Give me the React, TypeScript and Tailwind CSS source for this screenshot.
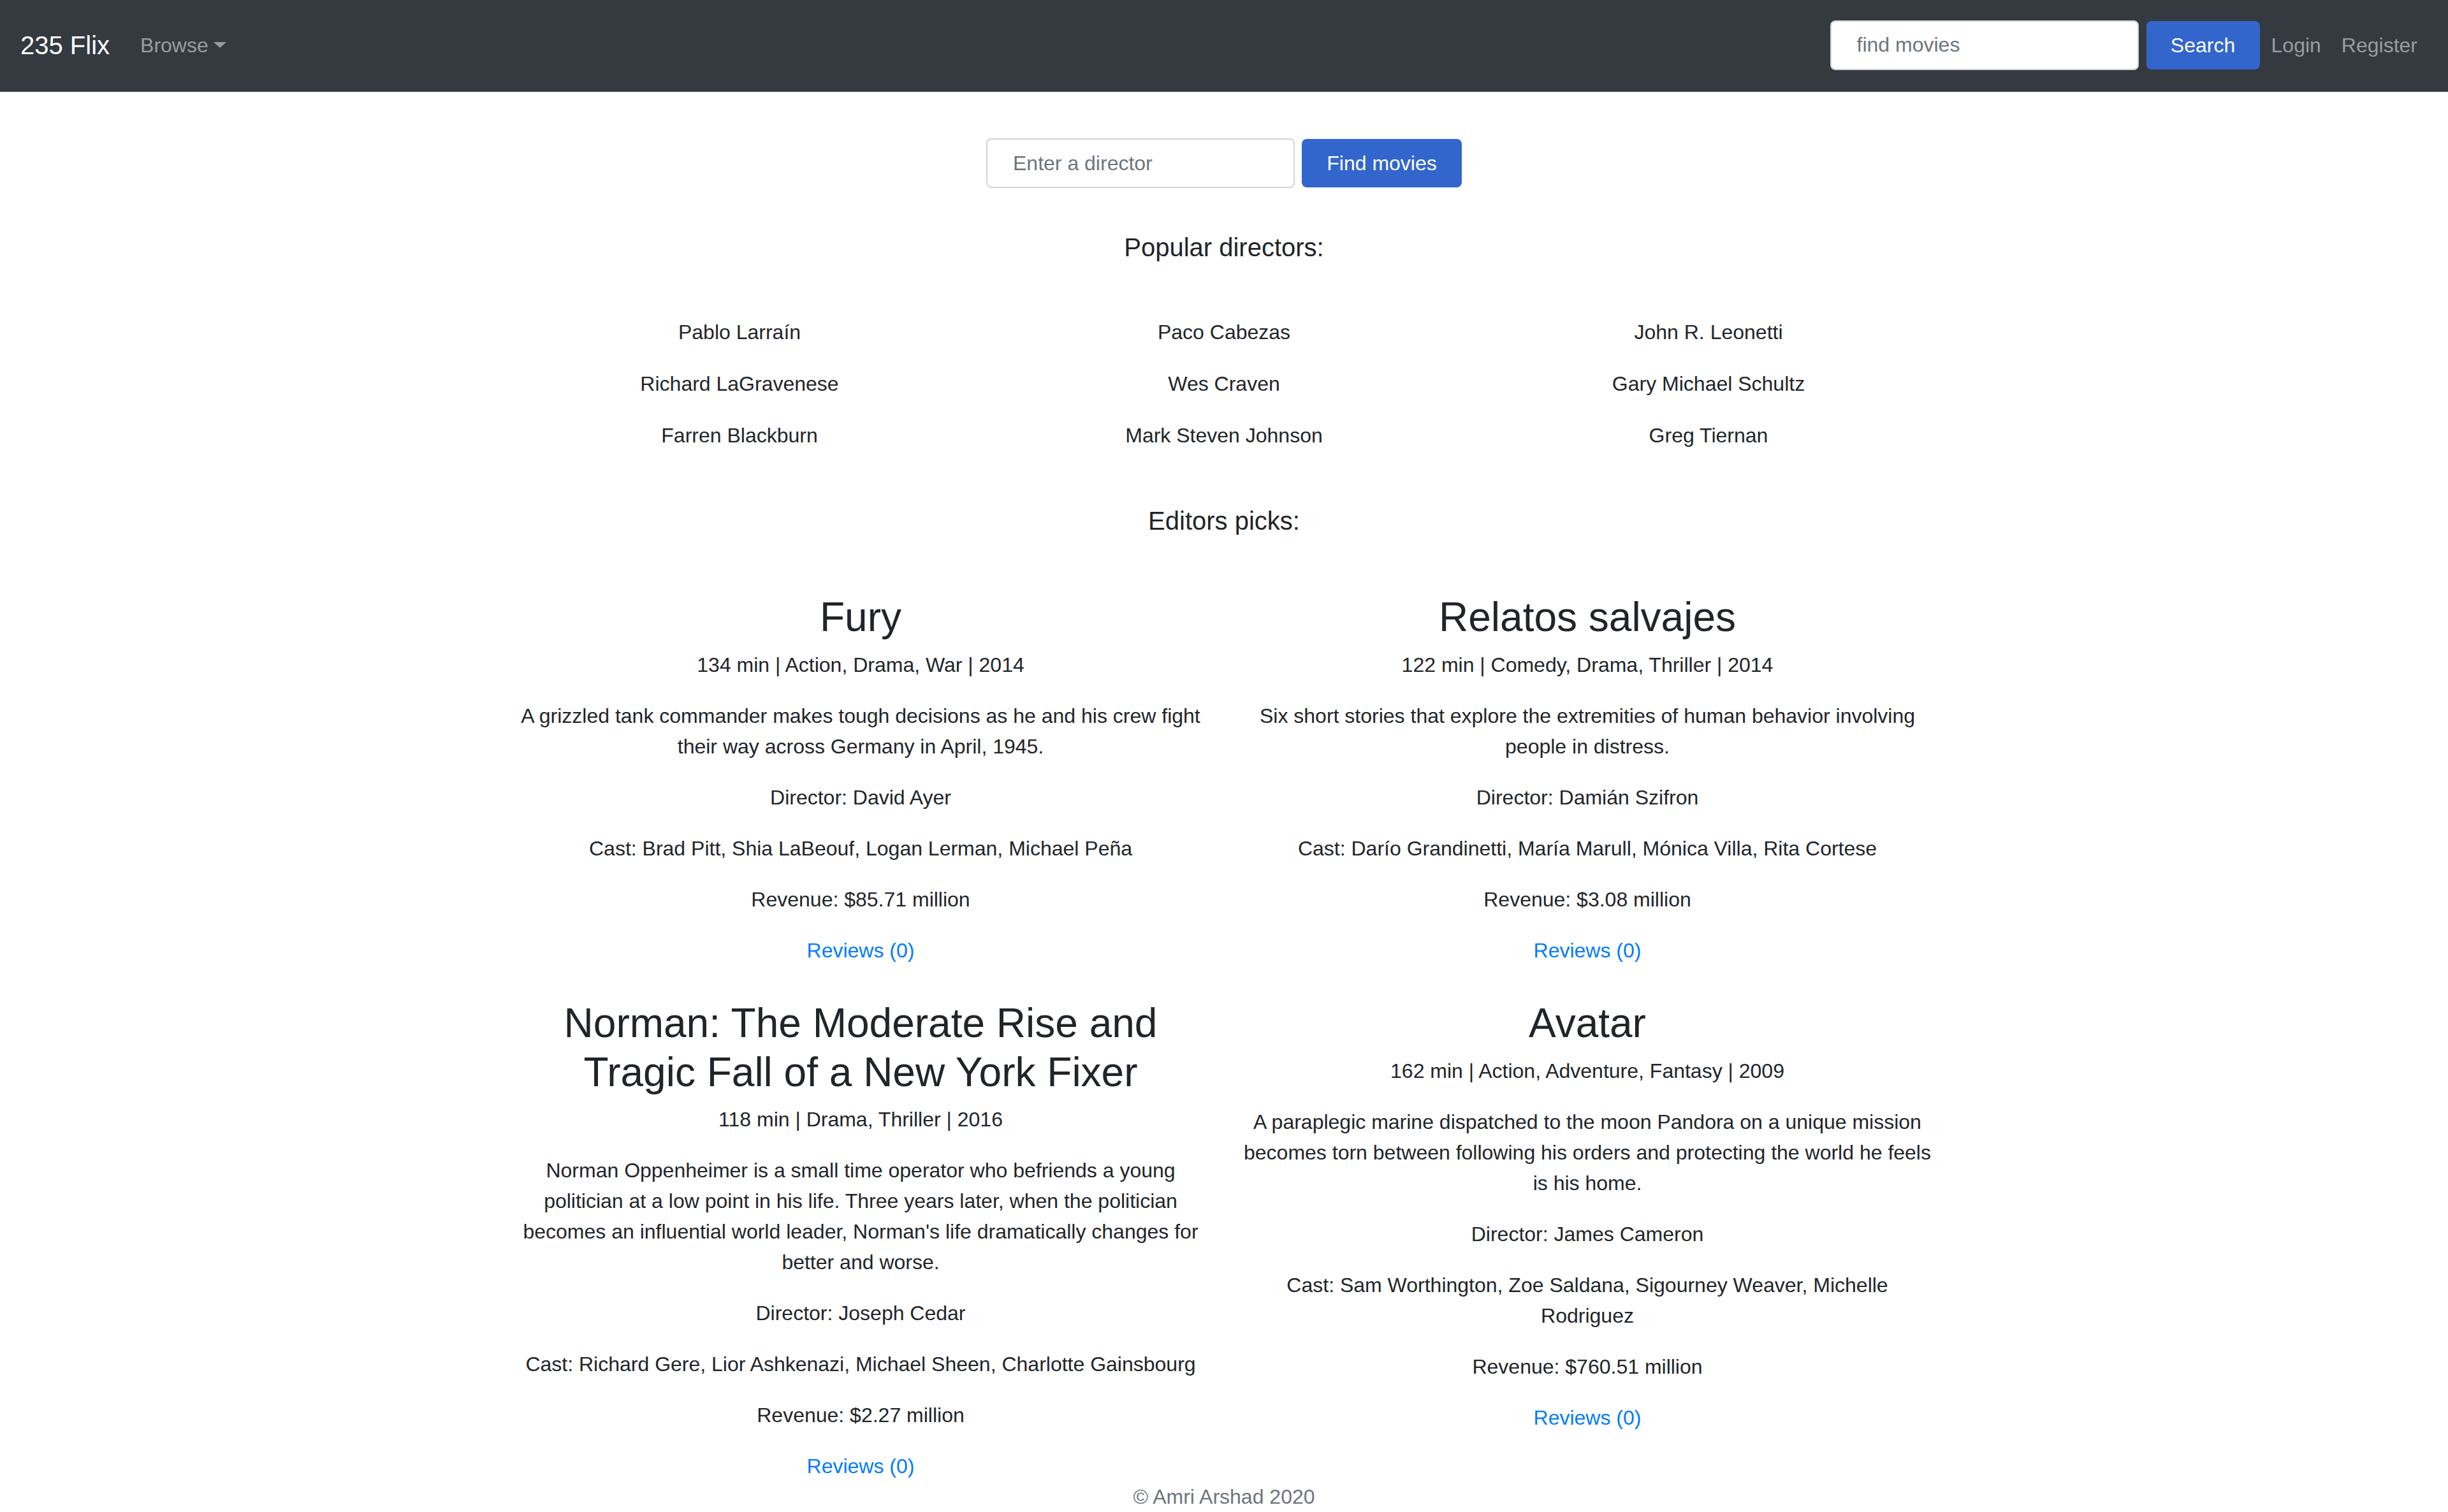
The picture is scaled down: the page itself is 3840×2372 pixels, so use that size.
import React from "react";

const directors = [
  "Pablo Larraín",
  "Paco Cabezas",
  "John R. Leonetti",
  "Richard LaGravenese",
  "Wes Craven",
  "Gary Michael Schultz",
  "Farren Blackburn",
  "Mark Steven Johnson",
  "Greg Tiernan",
];

type Movie = {
  title: string;
  meta: string;
  overview: string;
  director: string;
  cast: string;
  revenue: string;
};

const movies: Movie[] = [
  {
    title: "Fury",
    meta: "134 min | Action, Drama, War | 2014",
    overview:
      "A grizzled tank commander makes tough decisions as he and his crew fight their way across Germany in April, 1945.",
    director: "David Ayer",
    cast: "Brad Pitt, Shia LaBeouf, Logan Lerman, Michael Peña",
    revenue: "$85.71 million",
  },
  {
    title: "Relatos salvajes",
    meta: "122 min | Comedy, Drama, Thriller | 2014",
    overview:
      "Six short stories that explore the extremities of human behavior involving people in distress.",
    director: "Damián Szifron",
    cast: "Darío Grandinetti, María Marull, Mónica Villa, Rita Cortese",
    revenue: "$3.08 million",
  },
  {
    title: "Norman: The Moderate Rise and Tragic Fall of a New York Fixer",
    meta: "118 min | Drama, Thriller | 2016",
    overview:
      "Norman Oppenheimer is a small time operator who befriends a young politician at a low point in his life. Three years later, when the politician becomes an influential world leader, Norman's life dramatically changes for better and worse.",
    director: "Joseph Cedar",
    cast: "Richard Gere, Lior Ashkenazi, Michael Sheen, Charlotte Gainsbourg",
    revenue: "$2.27 million",
  },
  {
    title: "Avatar",
    meta: "162 min | Action, Adventure, Fantasy | 2009",
    overview:
      "A paraplegic marine dispatched to the moon Pandora on a unique mission becomes torn between following his orders and protecting the world he feels is his home.",
    director: "James Cameron",
    cast: "Sam Worthington, Zoe Saldana, Sigourney Weaver, Michelle Rodriguez",
    revenue: "$760.51 million",
  },
];

const MovieCard = ({ movie }: { movie: Movie }) => {
  return (
    <div className="px-[30px]">
      <h2 className="text-[64px] leading-[76.8px] mb-[12px]">{movie.title}</h2>
      <p className="mb-[32px]">{movie.meta}</p>
      <p className="mb-[32px]">{movie.overview}</p>
      <p className="mb-[32px]">Director: {movie.director}</p>
      <p className="mb-[32px]">Cast: {movie.cast}</p>
      <p className="mb-[32px]">Revenue: {movie.revenue}</p>
      <a href="#" className="text-[#007bff]">
        Reviews (0)
      </a>
    </div>
  );
};

export default function App() {
  return (
    <div className="min-h-[2372px] bg-white text-[#212529] text-[32px] leading-[48px] font-['Liberation_Sans',Arial,sans-serif]">
      <nav className="h-[144px] bg-[#343a40] flex items-center px-[32px] pb-[3px]">
        <a href="#" className="text-[40px] leading-[60px] text-white mr-[32px]">
          235 Flix
        </a>
        <a href="#" className="flex items-center px-[16px] text-white/50">
          Browse
          <span className="ml-[8px] w-0 h-0 border-t-[9px] border-t-[#9a9da0] border-x-[10px] border-x-transparent" />
        </a>
        <div className="ml-auto flex items-center">
          <input
            placeholder="find movies"
            className="w-[484px] h-[78px] px-[40px] bg-white border-2 border-[#ced4da] rounded-[8px] text-[#495057] placeholder:text-[#6c757d] outline-none"
          />
          <button className="ml-[12px] w-[178px] h-[76px] bg-[#3366cc] rounded-[8px] text-white">
            Search
          </button>
          <a href="#" className="px-[16px] ml-[2px] text-white/50">
            Login
          </a>
          <a href="#" className="px-[16px] text-white/50">
            Register
          </a>
        </div>
      </nav>

      <main className="w-[2280px] mx-auto text-center">
        <div className="flex justify-center items-center gap-[11px] pt-[73px]">
          <input
            placeholder="Enter a director"
            className="w-[484px] h-[78px] px-[40px] bg-white border-2 border-[#ced4da] rounded-[8px] text-[#495057] placeholder:text-[#6c757d] outline-none"
          />
          <button className="w-[251px] h-[76px] bg-[#3366cc] rounded-[8px] text-white">
            Find movies
          </button>
        </div>

        <h5 className="mt-[69px] text-[40px] leading-[48px]">Popular directors:</h5>

        <div className="grid grid-cols-3 mt-[85px]">
          {directors.map((d) => (
            <p key={d} className="mb-[33px]">
              {d}
            </p>
          ))}
        </div>

        <h5 className="mt-[53px] text-[40px] leading-[48px]">Editors picks:</h5>

        <div className="grid grid-cols-2 gap-y-[52px] mt-[89px]">
          {movies.map((m) => (
            <MovieCard key={m.title} movie={m} />
          ))}
        </div>

        <footer className="text-[#6c757d]">© Amri Arshad 2020</footer>
      </main>
    </div>
  );
}
